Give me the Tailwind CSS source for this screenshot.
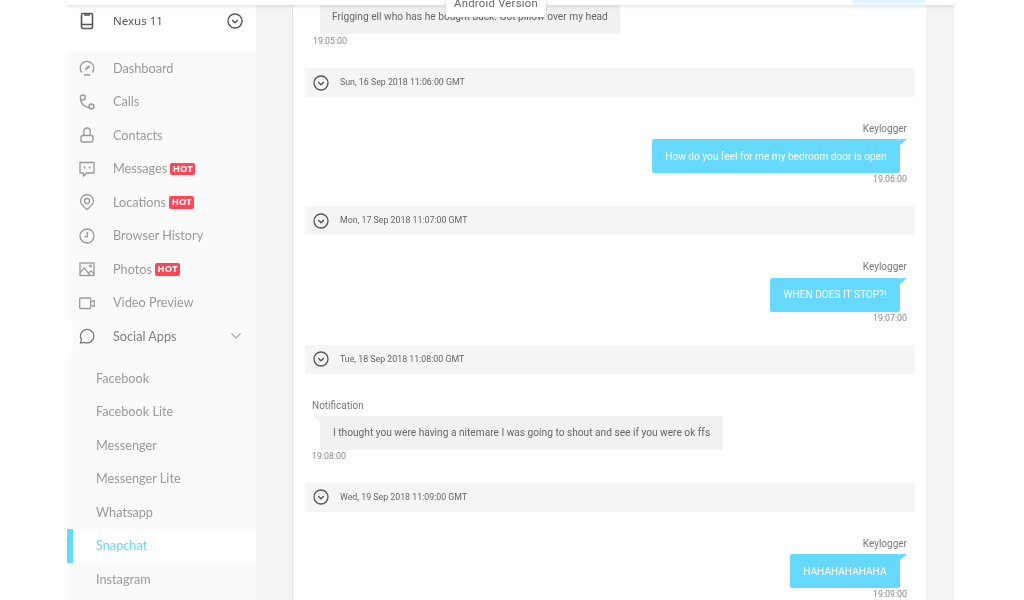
<!DOCTYPE html>
<html>
<head>
<meta charset="utf-8">
<script src="https://cdn.jsdelivr.net/npm/@tailwindcss/browser@4"></script>
<title>Snapchat</title>
</head>
<body class="bg-white overflow-hidden">
<div class="relative w-[1024px] h-[600px] overflow-hidden bg-white font-['Roboto',sans-serif] blur-[0.35px]">
  <header class="relative z-10 ml-[67px] w-[887px] h-[5px] bg-white shadow-[0_1px_4px_rgba(0,0,0,0.14)]"></header>
  <div class="absolute z-20 left-[446px] top-[-6px] w-[100px] h-[23px] bg-white rounded-[2px] shadow-[0_1px_3px_rgba(0,0,0,0.14)] text-center text-[11.3px] leading-[20px] text-[#666] tracking-[0.25px] whitespace-nowrap">Android Version</div>
  <div class="absolute z-20 left-[852px] top-0 w-[72px] h-[3px] bg-[#e0f3ff] shadow-[0_2px_6px_rgba(102,217,255,0.3)]"></div>
  <div class="flex ml-[67px] w-[887px] h-[595px] bg-[#f4f4f4] overflow-hidden">
    <aside class="w-[189px] shrink-0 bg-[#fafafa] font-['Lato',sans-serif] text-[12.7px] text-[#9a9a9a]">
      <div class="h-[46.5px] bg-white flex items-start pt-[7px] pl-[12px] pr-[13px] font-['Noto_Sans',sans-serif] text-[#555] text-[11.5px]">
        <svg class="w-[16px] h-[18px] mr-[18px] shrink-0" viewBox="0 0 16 18" fill="none" stroke="#555" stroke-width="1.6"><rect x="2.500" y="1.500" width="11" height="15" rx="1.500"/><path d="M2.500 12.500h11M6 1.500v1.500h4V1.500"/></svg>
        <span class="leading-[18px]">Nexus 11</span>
        <svg class="w-[16px] h-[16px] ml-auto mt-[1px]" viewBox="0 0 16 16" fill="none" stroke="#555" stroke-width="1.4"><circle cx="8" cy="8" r="7"/><path d="M5.200 7l2.800 2.800L10.800 7"/></svg>
      </div>
      <nav>
        <a class="flex items-center h-[33.5px] pl-[12px]"><svg class="w-[16px] h-[16px] mr-[18px] shrink-0" viewBox="0 0 16 16" fill="none" stroke="#999" stroke-width="1.3"><path d="M2.800 12.500A6.800 6.800 0 1 1 13.200 12.500M5 15h6"/><path d="M6.500 9.500L10.500 6" stroke-width="2"/></svg>Dashboard</a>
        <a class="flex items-center h-[33.5px] pl-[12px]"><svg class="w-[16px] h-[16px] mr-[18px] shrink-0" viewBox="0 0 16 16" fill="none" stroke="#999" stroke-width="1.4"><circle cx="3.800" cy="3.500" r="2.500"/><path d="M1.500 4.500C1.500 9 5 13 10 13.500"/><circle cx="12.500" cy="12.500" r="2.500"/></svg>Calls</a>
        <a class="flex items-center h-[33.5px] pl-[12px]"><svg class="w-[16px] h-[16px] mr-[18px] shrink-0" viewBox="0 0 16 16" fill="none" stroke="#999" stroke-width="1.4"><path d="M4.800 8.500V4.500a3.200 3.500 0 0 1 6.400 0v4"/><rect x="2" y="8.500" width="12" height="6.500" rx="2"/></svg>Contacts</a>
        <a class="flex items-center h-[33.5px] pl-[12px]"><svg class="w-[16px] h-[16px] mr-[18px] shrink-0" viewBox="0 0 16 16" fill="none" stroke="#999" stroke-width="1.3"><path d="M1 1.500h14v10.500H7.500L4.500 15v-3H1z"/><path d="M4.800 6.500h1.600M9.800 6.500h1.600" stroke-width="1.800"/></svg>Messages<span class="ml-[3px] h-[12.5px] w-[25px] text-center bg-[#ff4655] rounded-[2px] font-['Noto_Sans',sans-serif] text-white text-[9.5px] leading-[12.5px] font-bold">HOT</span></a>
        <a class="flex items-center h-[33.5px] pl-[12px]"><svg class="w-[16px] h-[16px] mr-[18px] shrink-0" viewBox="0 0 16 16" fill="none" stroke="#999" stroke-width="1.3"><path d="M8 15.500C4 12.500 1.500 10 1.500 7a6.500 6.500 0 0 1 13 0c0 3-2.500 5.500-6.500 8.500z"/><circle cx="8" cy="7" r="2.500"/></svg>Locations<span class="ml-[3px] h-[12.5px] w-[25px] text-center bg-[#ff4655] rounded-[2px] font-['Noto_Sans',sans-serif] text-white text-[9.5px] leading-[12.5px] font-bold">HOT</span></a>
        <a class="flex items-center h-[33.5px] pl-[12px]"><svg class="w-[16px] h-[16px] mr-[18px] shrink-0" viewBox="0 0 16 16" fill="none" stroke="#999" stroke-width="1.3"><circle cx="8" cy="8" r="7"/><path d="M8.500 4v4.500H5.500"/></svg>Browser History</a>
        <a class="flex items-center h-[33.5px] pl-[12px]"><svg class="w-[16px] h-[16px] mr-[18px] shrink-0" viewBox="0 0 16 16" fill="none" stroke="#999" stroke-width="1.300"><rect x="1" y="2" width="14" height="12.500"/><path d="M1 11.500L5.500 7l5.500 7.500M9.500 12l2.500-2 3 2.500"/><circle cx="11.500" cy="5" r=".8"/></svg>Photos<span class="ml-[3px] h-[12.5px] w-[25px] text-center bg-[#ff4655] rounded-[2px] font-['Noto_Sans',sans-serif] text-white text-[9.5px] leading-[12.5px] font-bold">HOT</span></a>
        <a class="flex items-center h-[33.5px] pl-[12px]"><svg class="w-[16px] h-[16px] mr-[18px] shrink-0" viewBox="0 0 16 16" fill="none" stroke="#999" stroke-width="1.300"><rect x=".7" y="3" width="11" height="10.500" rx="1"/><path d="M11.700 7l3.600-1.500v6l-3.600-1.500"/></svg>Video Preview</a>
        <a class="flex items-center h-[33.5px] border-l-[6px] border-white pl-[6px] pr-[15px] text-[#808080]"><svg class="w-[16px] h-[16px] mr-[18px] shrink-0" viewBox="0 0 16 16" fill="none" stroke="#777" stroke-width="1.300"><path d="M1.500 15l1-3.300A6.700 6.700 0 1 1 5.500 14.300z"/></svg>Social Apps<svg class="w-[10px] h-[6px] ml-auto" viewBox="0 0 10 6" fill="none" stroke="#aaa" stroke-width="1.200"><path d="M.5.5L5 5 9.500.5"/></svg></a>
        <div class="pt-[8.5px]">
          <a class="flex items-center h-[33.5px] pl-[29px]">Facebook</a>
          <a class="flex items-center h-[33.5px] pl-[29px]">Facebook Lite</a>
          <a class="flex items-center h-[33.5px] pl-[29px]">Messenger</a>
          <a class="flex items-center h-[33.5px] pl-[29px]">Messenger Lite</a>
          <a class="flex items-center h-[33.5px] pl-[29px]">Whatsapp</a>
          <a class="flex items-center h-[33.5px] pl-[23px] border-l-[6px] border-[#66d9ff] bg-white text-[#66d9ff]">Snapchat</a>
          <a class="flex items-center h-[33.5px] pl-[29px]">Instagram</a>
        </div>
      </nav>
    </aside>
    <div class="w-[36px] shrink-0"></div>
    <main class="w-[634px] shrink-0 bg-white border-l border-[#e3e3e3] pl-[12px] pr-[11px] text-[#888]">
      <div class="h-[68px] -mt-[5px]">
        <div class="ml-[15px] w-[300px] h-[34px] bg-[#f1f1f1] rounded-[2px] flex items-center pl-[12px] text-[10.2px] text-[#666]">Frigging ell who has he bought back. Got pillow over my head</div>
        <div class="ml-[8px] leading-[14px] text-[8.8px]">19:05:00</div>
      </div>
      <div class="h-[29px] bg-[#f5f5f5] flex items-center pl-[8px] text-[8.8px] text-[#666]"><svg class="w-[16px] h-[16px] mr-[11px] shrink-0" viewBox="0 0 16 16" fill="none" stroke="#555" stroke-width="1.300"><circle cx="8" cy="8" r="7"/><path d="M5.200 7l2.800 2.800L10.800 7"/></svg>Sun, 16 Sep 2018 11:06:00 GMT</div>
      <div class="h-[109.330px] pt-[25px] pr-[8px] flex flex-col items-end">
        <div class="h-[14px] leading-[14px] mb-[3.330px] text-[10px] text-[#777]">Keylogger</div>
        <div class="relative mr-[7px] h-[34px] bg-[#66d9ff] rounded-[2px] flex items-center px-[13.5px] text-[10.1px] text-white">How do you feel for me my bedroom door is open<span class="absolute right-[-7px] top-0 border-t-[6px] border-t-[#66d9ff] border-r-[7px] border-r-transparent"></span></div>
        <div class="-mt-[1px] leading-[14px] text-[8.8px]">19:06:00</div>
      </div>
      <div class="h-[29px] bg-[#f5f5f5] flex items-center pl-[8px] text-[8.8px] text-[#666]"><svg class="w-[16px] h-[16px] mr-[11px] shrink-0" viewBox="0 0 16 16" fill="none" stroke="#555" stroke-width="1.300"><circle cx="8" cy="8" r="7"/><path d="M5.200 7l2.800 2.800L10.800 7"/></svg>Mon, 17 Sep 2018 11:07:00 GMT</div>
      <div class="h-[109.330px] pt-[25px] pr-[8px] flex flex-col items-end">
        <div class="h-[14px] leading-[14px] mb-[3.330px] text-[10px] text-[#777]">Keylogger</div>
        <div class="relative mr-[7px] h-[34px] bg-[#66d9ff] rounded-[2px] flex items-center px-[13.5px] text-[10.1px] text-white">WHEN DOES IT STOP?!<span class="absolute right-[-7px] top-0 border-t-[6px] border-t-[#66d9ff] border-r-[7px] border-r-transparent"></span></div>
        <div class="-mt-[1px] leading-[14px] text-[8.8px]">19:07:00</div>
      </div>
      <div class="h-[29px] bg-[#f5f5f5] flex items-center pl-[8px] text-[8.8px] text-[#666]"><svg class="w-[16px] h-[16px] mr-[11px] shrink-0" viewBox="0 0 16 16" fill="none" stroke="#555" stroke-width="1.300"><circle cx="8" cy="8" r="7"/><path d="M5.200 7l2.800 2.800L10.800 7"/></svg>Tue, 18 Sep 2018 11:08:00 GMT</div>
      <div class="h-[109.330px] pt-[25px] pl-[7px] flex flex-col items-start">
        <div class="h-[14px] leading-[14px] mb-[3.330px] text-[10px] text-[#777]">Notification</div>
        <div class="relative ml-[8px] h-[34px] bg-[#f1f1f1] rounded-[2px] flex items-center px-[13px] text-[10.17px] text-[#666]">I thought you were having a nitemare I was going to shout and see if you were ok ffs<span class="absolute left-[-7px] top-0 border-t-[6px] border-t-[#f1f1f1] border-l-[7px] border-l-transparent"></span></div>
        <div class="-mt-[1px] leading-[14px] text-[8.8px]">19:08:00</div>
      </div>
      <div class="h-[29px] bg-[#f5f5f5] flex items-center pl-[8px] text-[8.8px] text-[#666]"><svg class="w-[16px] h-[16px] mr-[11px] shrink-0" viewBox="0 0 16 16" fill="none" stroke="#555" stroke-width="1.300"><circle cx="8" cy="8" r="7"/><path d="M5.200 7l2.800 2.800L10.800 7"/></svg>Wed, 19 Sep 2018 11:09:00 GMT</div>
      <div class="h-[109.330px] pt-[25px] pr-[8px] flex flex-col items-end">
        <div class="h-[14px] leading-[14px] mb-[3.330px] text-[10px] text-[#777]">Keylogger</div>
        <div class="relative mr-[7px] h-[34px] bg-[#66d9ff] rounded-[2px] flex items-center px-[13.5px] text-[10.1px] text-white">HAHAHAHAHAHA<span class="absolute right-[-7px] top-0 border-t-[6px] border-t-[#66d9ff] border-r-[7px] border-r-transparent"></span></div>
        <div class="-mt-[1px] leading-[14px] text-[8.8px]">19:09:00</div>
      </div>
    </main>
  </div>
</div>
</body>
</html>
